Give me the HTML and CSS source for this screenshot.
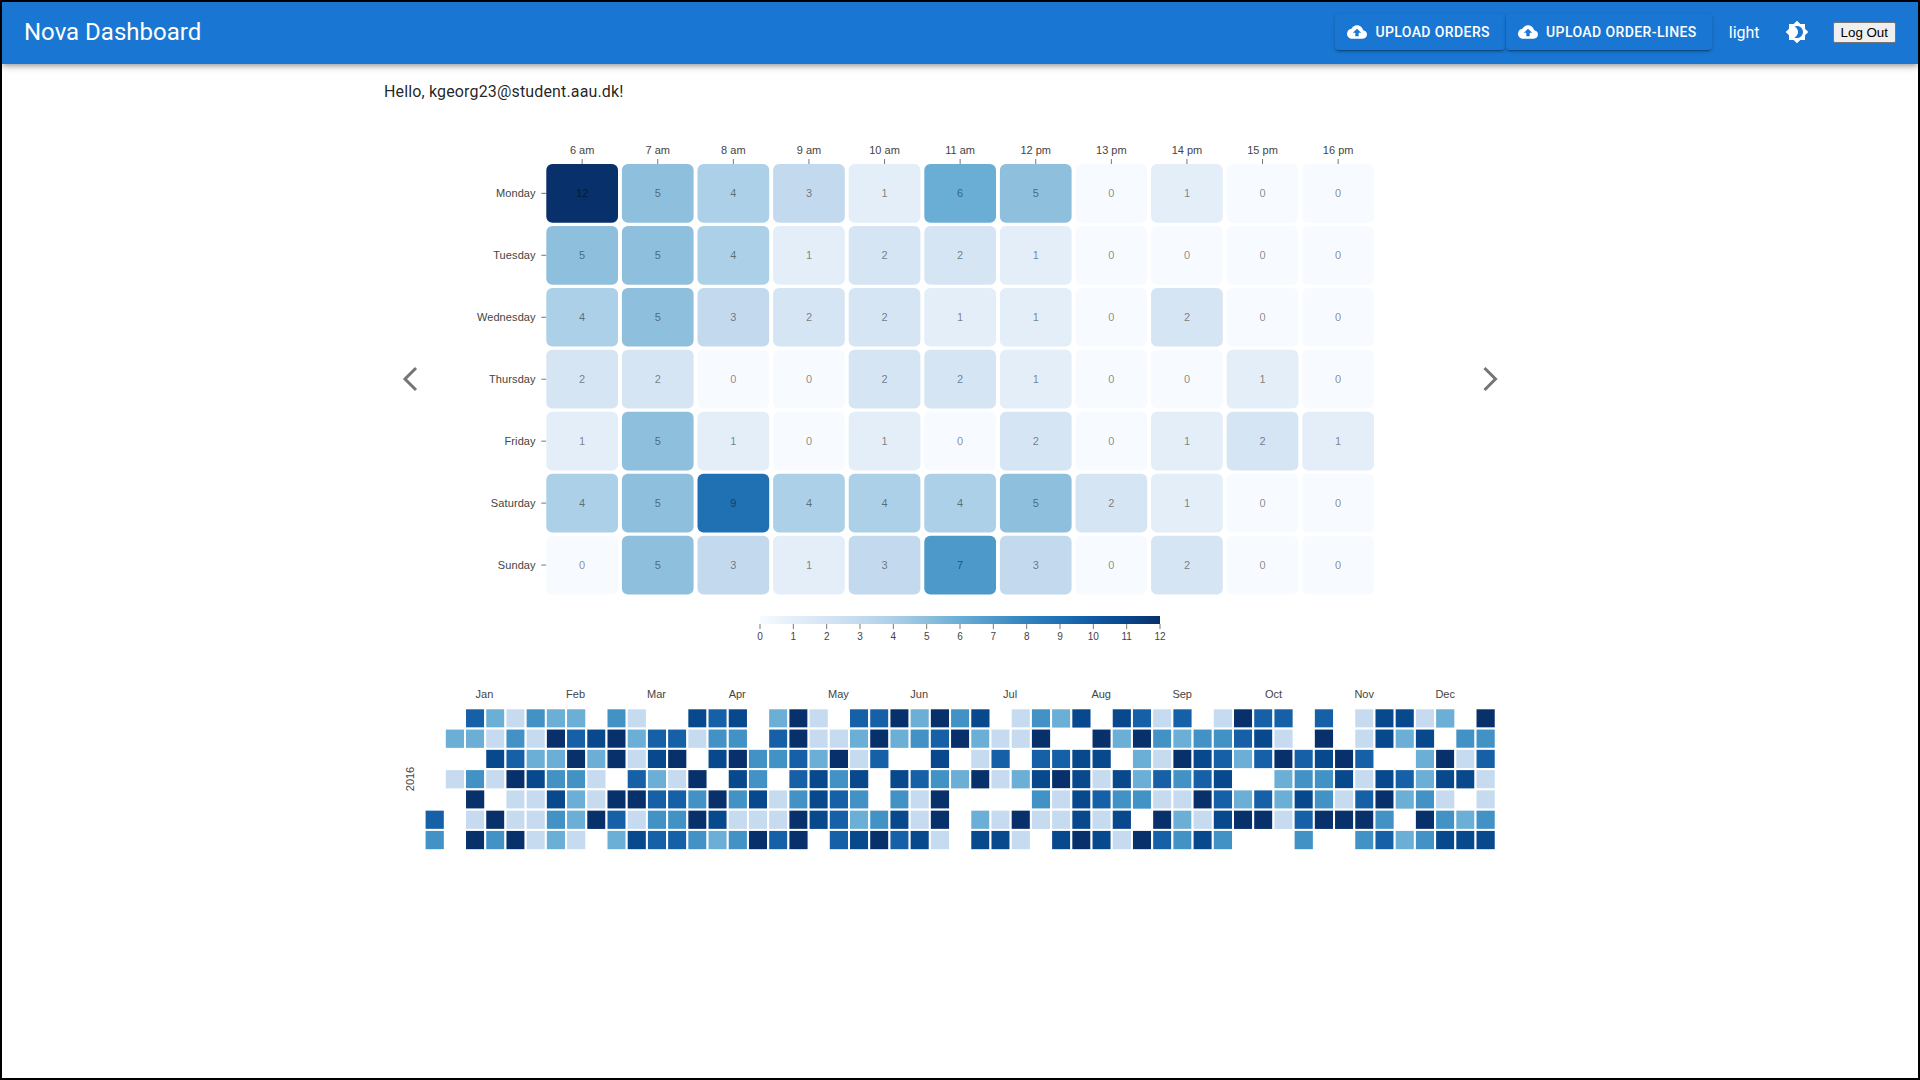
FILE: index.html
```html
<!DOCTYPE html>
<html>
<head>
  <title>Nova Dashboard</title>
  <link rel="stylesheet" href="styles.css">
</head>
<body>
  <div class="page">
    <header class="appbar">
      <div class="brand">Nova Dashboard</div>
      <div class="actions">
        <div class="uploads">
          <button class="upload-btn">
            <svg class="upload-icon" viewBox="0 0 24 24"><path d="M19.35 10.04C18.67 6.59 15.64 4 12 4 9.11 4 6.6 5.64 5.35 8.04 2.34 8.36 0 10.91 0 14c0 3.31 2.69 6 6 6h13c2.76 0 5-2.24 5-5 0-2.64-2.05-4.78-4.65-4.96zM14 13v4h-4v-4H7l5-5 5 5h-3z"/></svg>
            Upload Orders
          </button>
          <button class="upload-btn">
            <svg class="upload-icon" viewBox="0 0 24 24"><path d="M19.35 10.04C18.67 6.59 15.64 4 12 4 9.11 4 6.6 5.64 5.35 8.04 2.34 8.36 0 10.91 0 14c0 3.31 2.69 6 6 6h13c2.76 0 5-2.24 5-5 0-2.64-2.05-4.78-4.65-4.96zM14 13v4h-4v-4H7l5-5 5 5h-3z"/></svg>
            Upload Order-Lines
          </button>
        </div>
        <span class="mode-label">light</span>
        <svg class="mode-icon" viewBox="0 0 24 24"><path d="M20 8.69V4h-4.69L12 .69 8.69 4H4v4.69L.69 12 4 15.31V20h4.69L12 23.31 15.31 20H20v-4.69L23.31 12 20 8.69zM12 18c-.89 0-1.74-.2-2.5-.55C11.56 16.5 13 14.42 13 12s-1.44-4.5-3.5-5.45C10.26 6.2 11.11 6 12 6c3.31 0 6 2.69 6 6s-2.69 6-6 6z"/></svg>
        <button class="logout">Log Out</button>
      </div>
    </header>

    <main class="content">
      <p class="hello">Hello, kgeorg23@student.aau.dk!</p>

      <div class="heatmap-row">
        <svg class="chevron chevron-prev" viewBox="0 0 52 30"><path d="M32 4 L21 15 L32 26"/></svg>
        <svg id="heatmap" class="heatmap" width="1032" height="530"></svg>
        <svg class="chevron chevron-next" viewBox="0 0 44 30"><path d="M16.5 4 L27.5 15 L16.5 26"/></svg>
      </div>

      <svg id="calendar" class="calendar" width="1128" height="190"></svg>
    </main>
  </div>
  <script src="script.js"></script>
</body>
</html>
```

FILE: styles.css
```css
body {
  margin: 0;
  background: #fff;
  font-family: Roboto, sans-serif;
}
.page {
  box-sizing: border-box;
  height: 100vh;
  border: 2px solid #000;
  overflow: hidden;
}
.appbar {
  box-sizing: border-box;
  display: flex;
  justify-content: space-between;
  align-items: center;
  height: 62px;
  padding: 0 22px 2px;
  background: #1976d2;
  color: #fff;
  box-shadow: 0 2px 4px -1px rgba(0,0,0,.2), 0 4px 5px 0 rgba(0,0,0,.14), 0 1px 10px 0 rgba(0,0,0,.12);
}
.brand {
  font-size: 24px;
  letter-spacing: 0;
}
.actions {
  display: flex;
  align-items: center;
}
.uploads {
  display: flex;
  gap: 1px;
}
.upload-btn {
  display: flex;
  align-items: center;
  height: 36px;
  padding: 0 15px 0 12px;
  border: none;
  border-radius: 4px;
  background: #1976d2;
  color: #fff;
  font-family: Roboto, sans-serif;
  font-size: 14px;
  font-weight: 500;
  letter-spacing: .4px;
  text-transform: uppercase;
  box-shadow: 0 3px 1px -2px rgba(0,0,0,.2), 0 2px 2px 0 rgba(0,0,0,.14), 0 1px 5px 0 rgba(0,0,0,.12);
}
.upload-icon {
  width: 20px;
  height: 20px;
  margin-right: 8px;
  fill: #fff;
}
.mode-label {
  margin-left: 17px;
  font-size: 16px;
}
.mode-icon {
  width: 24px;
  height: 24px;
  margin: 0 24px 0 25px;
  fill: #fff;
}
.logout {
  padding: 2px 7px;
  border: 1px solid #767676;
  border-radius: 2px;
  background: #efefef;
  color: #000;
  font-family: "Liberation Sans", Arial, sans-serif;
  font-size: 13.333px;
}
.content {
  box-sizing: border-box;
  width: 1200px;
  margin: 0 auto;
  padding: 0 24px;
}
.hello {
  margin: 16px 0 10px;
  font-size: 16px;
  line-height: 24px;
  letter-spacing: .15px;
  color: rgba(0,0,0,.87);
}
.heatmap-row {
  display: flex;
  align-items: center;
}
.heatmap {
  flex: none;
}
.chevron {
  flex: none;
  height: 30px;
}
.chevron path {
  fill: none;
  stroke: #757575;
  stroke-width: 3;
}
.chevron-prev {
  width: 52px;
}
.chevron-next {
  width: 44px;
}
.calendar {
  display: block;
  margin-top: 36px;
}
.chart-label {
  font-family: "Liberation Sans", Arial, sans-serif;
  font-size: 11px;
  fill: #444;
  text-anchor: middle;
  dominant-baseline: central;
}
.chart-label.end {
  text-anchor: end;
  letter-spacing: .1px;
}
.legend-label {
  font-size: 10px;
}
.cell-value {
  fill: rgba(0,0,0,.48);
}
.tick {
  stroke: #777;
  stroke-width: 1;
}
.day {
  stroke: #fff;
  stroke-width: 2;
}
```

FILE: script.js
```js
const NS = 'http://www.w3.org/2000/svg';

function add(parent, tag, attrs, text) {
  const el = document.createElementNS(NS, tag);
  for (const k in attrs) el.setAttribute(k, attrs[k]);
  if (text !== undefined) el.textContent = text;
  parent.appendChild(el);
  return el;
}

// colour per order count, 0..12
const BLUES = ['#f7fbff', '#e3eef9', '#d5e5f4', '#c3daee', '#abd0e7', '#8ebfdd', '#6aaed6',
  '#4d99ca', '#3282be', '#2070b4', '#1059a2', '#08468b', '#08306b'];

const HOURS = ['6 am', '7 am', '8 am', '9 am', '10 am', '11 am', '12 pm', '13 pm', '14 pm', '15 pm', '16 pm'];
const WEEK = [
  ['Monday', [12, 5, 4, 3, 1, 6, 5, 0, 1, 0, 0]],
  ['Tuesday', [5, 5, 4, 1, 2, 2, 1, 0, 0, 0, 0]],
  ['Wednesday', [4, 5, 3, 2, 2, 1, 1, 0, 2, 0, 0]],
  ['Thursday', [2, 2, 0, 0, 2, 2, 1, 0, 0, 1, 0]],
  ['Friday', [1, 5, 1, 0, 1, 0, 2, 0, 1, 2, 1]],
  ['Saturday', [4, 5, 9, 4, 4, 4, 5, 2, 1, 0, 0]],
  ['Sunday', [0, 5, 3, 1, 3, 7, 3, 0, 2, 0, 0]]
];

function drawHeatmap() {
  const svg = document.getElementById('heatmap');
  const x0 = 110.3, y0 = 50, stepX = 75.6, stepY = 61.95, w = 71.7, h = 58.7;

  HOURS.forEach((hour, c) => {
    const cx = x0 + c * stepX + w / 2;
    add(svg, 'line', {class: 'tick', x1: cx, x2: cx, y1: y0 - 5, y2: y0});
    add(svg, 'text', {class: 'chart-label', x: cx, y: y0 - 14}, hour);
  });

  WEEK.forEach(([day, values], r) => {
    const top = y0 + r * stepY;
    const cy = top + h / 2;
    add(svg, 'line', {class: 'tick', x1: x0 - 5, x2: x0, y1: cy, y2: cy});
    add(svg, 'text', {class: 'chart-label end', x: x0 - 10.6, y: cy}, day);
    values.forEach((v, c) => {
      const left = x0 + c * stepX;
      add(svg, 'rect', {x: left, y: top, width: w, height: h, rx: 6, fill: BLUES[v]});
      add(svg, 'text', {class: 'chart-label cell-value', x: left + w / 2, y: cy}, v);
    });
  });

  // legend
  const defs = add(svg, 'defs', {});
  const grad = add(defs, 'linearGradient', {id: 'legendFill'});
  BLUES.forEach((col, i) => add(grad, 'stop', {offset: (i / 12 * 100) + '%', 'stop-color': col}));
  add(svg, 'rect', {x: 324, y: 502, width: 400, height: 8, fill: 'url(#legendFill)'});
  for (let i = 0; i <= 12; i++) {
    const lx = 324 + i * 400 / 12;
    add(svg, 'line', {class: 'tick', x1: lx, x2: lx, y1: 510, y2: 515});
    add(svg, 'text', {class: 'chart-label legend-label', x: lx, y: 522}, i);
  }
}

const MONTHS = [['Jan', 484.4], ['Feb', 575.6], ['Mar', 656.5], ['Apr', 737.2], ['May', 838.4], ['Jun', 919.2],
  ['Jul', 1010.1], ['Aug', 1101.2], ['Sep', 1182.2], ['Oct', 1273.6], ['Nov', 1364.2], ['Dec', 1445.2]];

const LEVELS = {a: '#c6dbef', b: '#6baed6', c: '#4292c6', d: '#1660a8', e: '#08488c', f: '#08306b'};

// one string per weekday, one letter per week of 2016, '.' = no orders
const DAYS = [
  '..dbacbb.ca..ede.bfa.ddfbfce.acbe.edad.afdd.d.aeeab.f',
  '.bbacafdefbddacc.dfaabfbcdfbaaf..fbfcbccdea.f.aebe.cc',
  '...edbbfbfaef.efccdbfad..e.ad.ddee.bafedbdfdefd..bfad',
  '.acafecca.dbaf.ec.dece.edcbfabefeaebdcde..bcceaedbeea',
  '..f.aaebaffddcfceacedc.caf....caedccaafdbdbecadfbca.a',
  'd.afaacbfdaccfeaaafedbceaf.bafaaeae.fbaeffadfffc.fcbc',
  'c.fcfaba.beddcbcfdf.defdea.eea.efeafdcec...c..cdbceee'
];

function drawCalendar() {
  const svg = document.getElementById('calendar');
  const x0 = 40.6, y0 = 28.3, stepX = 20.21, stepY = 20.27;

  MONTHS.forEach(([name, x]) => add(svg, 'text', {class: 'chart-label', x: x - 384, y: 14}, name));
  add(svg, 'text', {class: 'chart-label', x: 0, y: 0, transform: 'translate(26,99) rotate(-90)'}, '2016');

  DAYS.forEach((row, r) => {
    [...row].forEach((ch, c) => {
      if (ch === '.') return;
      add(svg, 'rect', {class: 'day', x: x0 + c * stepX, y: y0 + r * stepY, width: stepX, height: stepY, fill: LEVELS[ch]});
    });
  });
}

drawHeatmap();
drawCalendar();
```
